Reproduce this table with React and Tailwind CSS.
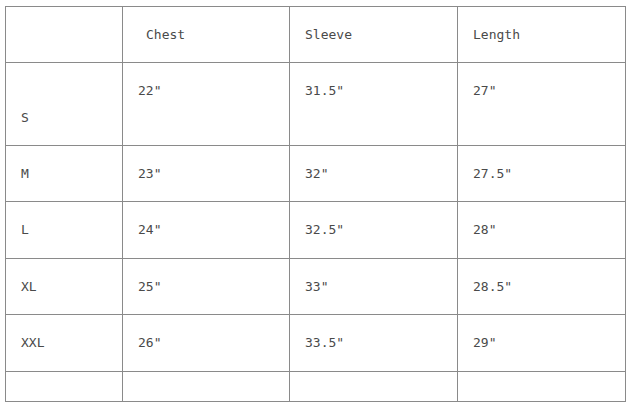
const rows = [
  { size: "S", vals: ['22"', '31.5"', '27"'], h: "h-[83px]", tall: true },
  { size: "M", vals: ['23"', '32"', '27.5"'], h: "h-[56px]" },
  { size: "L", vals: ['24"', '32.5"', '28"'], h: "h-[57px]" },
  { size: "XL", vals: ['25"', '33"', '28.5"'], h: "h-[56px]" },
  { size: "XXL", vals: ['26"', '33.5"', '29"'], h: "h-[57px]" },
];

export default function App() {
  return (
    <div className="w-[630px] h-[409px] bg-white pt-[6px] pl-[5px] overflow-hidden">
      <table
        className="table-fixed border-collapse w-[621px] text-[13px] leading-4 text-[#4a4a4a]"
        style={{ fontFamily: '"DejaVu Sans Mono", "Liberation Mono", monospace' }}
      >
        <colgroup>
          <col className="w-[117px]" />
          <col className="w-[167px]" />
          <col className="w-[168px]" />
          <col className="w-[168px]" />
        </colgroup>
        <tbody>
          <tr className="h-[56px]">
            <td className="border border-[#8a8a8a] px-[15px]"></td>
            <td className="border border-[#8a8a8a] pl-[23px] pr-[15px] align-middle">Chest</td>
            <td className="border border-[#8a8a8a] px-[15px] align-middle">Sleeve</td>
            <td className="border border-[#8a8a8a] px-[15px] align-middle">Length</td>
          </tr>
          {rows.map((r) => (
            <tr key={r.size} className={r.h}>
              <td
                className={
                  "border border-[#8a8a8a] px-[15px] " +
                  (r.tall ? "align-top pt-[47px]" : "align-middle")
                }
              >
                {r.size}
              </td>
              {r.vals.map((v, i) => (
                <td
                  key={i}
                  className={
                    "border border-[#8a8a8a] px-[15px] " +
                    (r.tall ? "align-top pt-[20px]" : "align-middle")
                  }
                >
                  {v}
                </td>
              ))}
            </tr>
          ))}
          <tr className="h-[30px]">
            <td className="border border-[#8a8a8a]"></td>
            <td className="border border-[#8a8a8a]"></td>
            <td className="border border-[#8a8a8a]"></td>
            <td className="border border-[#8a8a8a]"></td>
          </tr>
        </tbody>
      </table>
    </div>
  );
}
